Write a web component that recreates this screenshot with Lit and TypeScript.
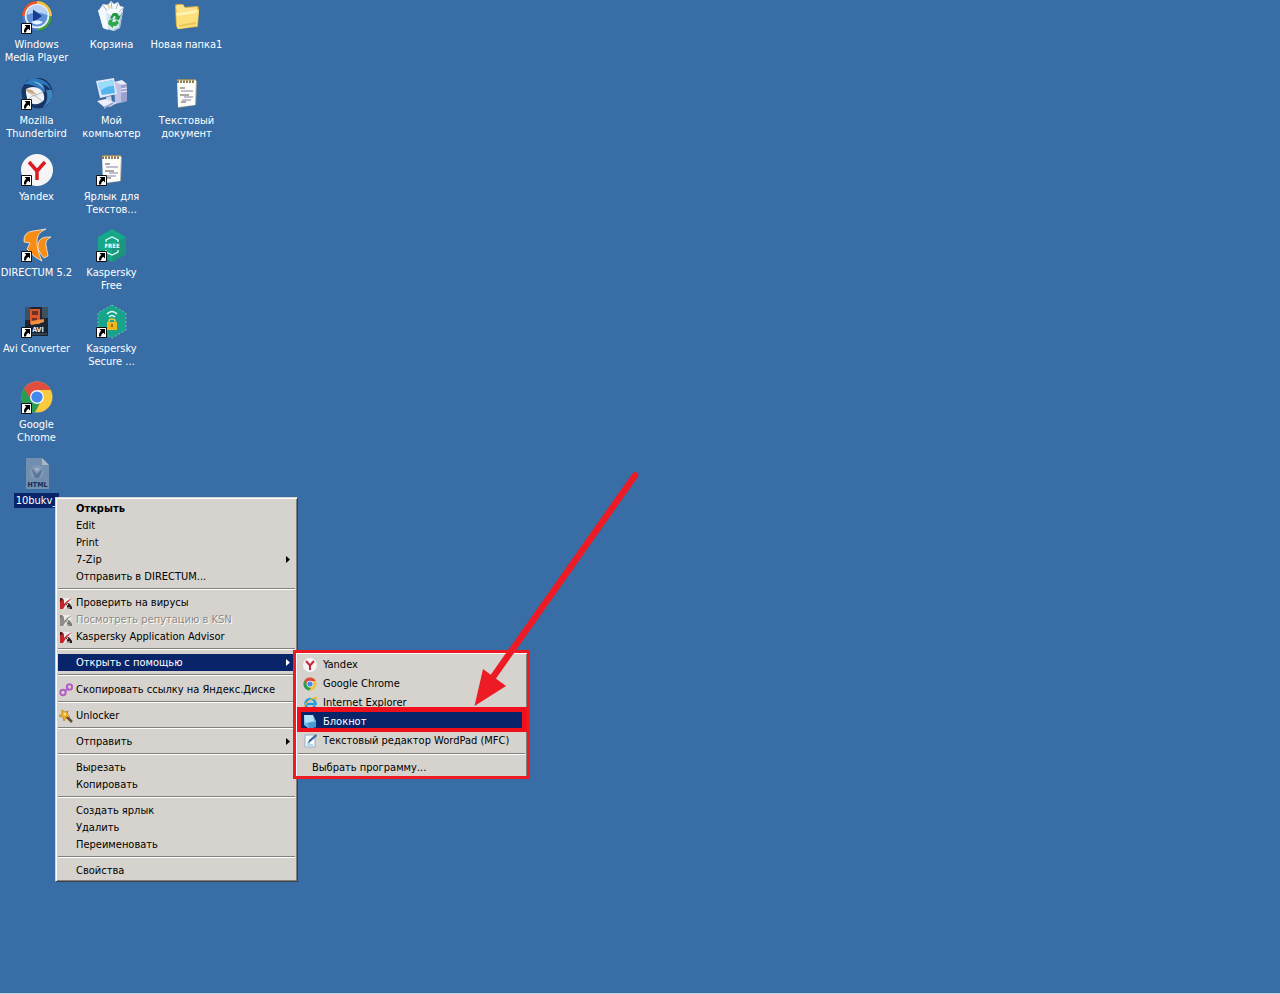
import { LitElement, html, svg, css, nothing, TemplateResult, SVGTemplateResult } from "lit";
import { customElement, property } from "lit/decorators.js";
import { classMap } from "lit/directives/class-map.js";

type Art = Record<string, SVGTemplateResult>;

const desktopArt: Art = {
  player: svg`
    <circle cx="16" cy="15" r="15.500" fill="#2d5f9c"/>
    <path d="M16 0A15 15 0 0 0 1 15h6a9 9 0 0 1 9-9z" fill="#e4572a"/>
    <path d="M16 0a15 15 0 0 1 15 15h-5a10 10 0 0 0-10-10z" fill="#f0c040"/>
    <path d="M31 15a15 15 0 0 1-15 15v-5a10 10 0 0 0 10-10z" fill="#3fa043"/>
    <path d="M1 15a15 15 0 0 0 15 15v-5A10 10 0 0 1 6 15z" fill="#4679c8"/>
    <circle cx="16" cy="15" r="12.300" fill="#e6edf7"/>
    <circle cx="16" cy="15" r="10.500" fill="#5d90d8"/>
    <path d="M6 14a10 10 0 0 1 20 0q-10-5-20 0z" fill="#b9d3f4"/>
    <path d="M12 8.500 21 15l-9 6.500z" fill="#173d92"/>
    <path d="M10 21q6 5 12 0l-4-1.500h-4z" fill="#e8f2fd"/>`,
  recycle: svg`
    <path d="m2 9 25 1-3 17-6 3-11-3z" fill="#d4e5ef"/>
    <path d="m2 9 8 3 2 17-5-2z" fill="#f4fafd"/>
    <path d="m3 9 4-6 5 1 3-4 3 3 4-2 2 4 4 1-2 5-10 3z" fill="#f8fbfd"/>
    <path d="m7 4 4 6M15 0l1 8m6-6-2 6m8-2-5 5" stroke="#9db9cd" fill="none"/>
    <path d="m11 3 4 2-2 4" fill="#e9d79e"/>
    <path d="m26 11-3 16-5 2" stroke="#9ebbd0" fill="none"/>
    <path d="m14 17 3-5h4l2 3 2-1-2 5-5-1 2-1-1-2-1 0-2 3z" fill="#239842"/>
    <path d="m13 19 4-1-1 3h3l2-2 2 3-3 3h-3v2l-5-4z" fill="#2fa94b"/>`,
  folder: svg`
    <path d="M4 5q0-2 2-2h6l2 3 12-1q2 0 2 2l-1 19-20 2-2-3z" fill="#d9ad3c"/>
    <path d="M5 6q0-2 2-2h5l2 3 12-1v4L6 12z" fill="#fbe58f"/>
    <path d="m5 11 21-3q2 0 2 2l-2 15-18 3q-2 0-2-2z" fill="#fbe07c"/>
    <path d="m6 12 20-3-1 3-19 3z" fill="#fff3b4"/>
    <path d="m8 25 17-3" stroke="#edc65a" stroke-width="2"/>`,
  thunderbird: svg`
    <path d="M6 3 13 2Q21-1 27 5q6 6 4 14-2 9-10 12Q11 33 4 25-1 19 1 11z" fill="#173567"/>
    <path d="M3 7Q9-1 18 2q10 2 12 12-3-6-9-7 4 5 2 9-8-9-20-9z" fill="#2f78bd"/>
    <path d="M31 13q2 12-9 17 7-8 3-17z" fill="#3f86c0"/>
    <path d="M5 12q7-4 14 0 5 4 4 11-4 5-11 4Q4 24 5 12z" fill="#eef1f3"/>
    <path d="m5 13 8 6 9-4M6 23l7-5 8 6" stroke="#b5b9bb" fill="none"/>
    <path d="m5 12 6 1 5 5-9-3z" fill="#cda477"/>
    <path d="M11 4q10 1 13 9-4-5-13-9" fill="#7dbbe5"/>`,
  computer: svg`
    <path d="m18 5 13 2v17l-12 3z" fill="#bec2e4"/>
    <path d="m18 5 8-2 5 4-4 1z" fill="#eceefb"/>
    <path d="m25 8 6-1v17l-6 2z" fill="#9ba2d2"/>
    <path d="m25 12 6-1m-6 4 6-1" stroke="#f1f2ff"/>
    <path d="m0 4 18-3 3 16-17 4z" fill="#e4e8f7"/>
    <path d="m2 6 15-3 2 13-13 2z" fill="#55b4ed"/>
    <path d="m2 6 15-3 1 6Q9 9 5 14z" fill="#9bdcfa"/>
    <path d="m10 20 5-1 1 5 5 2-7 4-7-3 4-2z" fill="#d0d5ec"/>
    <path d="m1 24 9-2 7 3-9 5z" fill="#eff1fa"/>
    <path d="m8 30 9-5v2l-9 5z" fill="#9ba7d5"/>`,
  note: svg`
    <path d="M7 4h19l-1 24-18 3z" fill="#aaa697"/>
    <path d="M6 3h19l-1 25-17 2z" fill="#fcfcf8"/>
    <path d="M7 2v4m3-4v4m3-4v4m3-4v4m3-4v4m3-4v4" stroke="#65522e" stroke-width="1.500"/>
    <path d="M6 3h19" stroke="#d4b76b"/>
    <path d="M9 11h5m-5 7h9m-8 7h5" stroke="#545454"/>
    <path d="M10 14h12m-9 6h9m-11 3h9" stroke="#8581a8"/>`,
  yandex: svg`
    <circle cx="16" cy="17" r="16" fill="#f5f5f5"/>
    <path d="m8 9 8 9 8-9M16 17v10" stroke="#d91c24" stroke-width="3.500" fill="none"/>`,
  directum: svg`
    <path d="M3 13Q2 3 12 2l13-2q-10 4-9 14 0 7 5 18l-7-4-8-8 3-6z" fill="#f78d14" stroke="#fff" stroke-width=".7"/>
    <path d="M17 15q1-8 13-7-6 3-5 8l2 11-4 2q-7-7-6-14z" fill="#f78d14" stroke="#fff" stroke-width=".7"/>`,
  kfree: svg`
    <path d="M16 0 30 8v17l-14 8L2 25V8z" fill="#16a788"/>
    <path d="m30 8-14 9v16l14-8z" fill="#1b957c"/>
    <path d="M10 13v-2l6-3 6 3v2M10 21v2l6 3 6-3v-2" stroke="#d8fff4" fill="none" stroke-width="1.300"/>
    <text x="16" y="19" text-anchor="middle" font-size="6" font-weight="bold" fill="#fff">FREE</text>`,
  avi: svg`
    <path d="M4 2h23v29H4z" fill="#202631"/>
    <path d="M4 2h5v13H4zM21 2h6v11h-6z" fill="#3c5260"/>
    <path d="M9 4h10v15H9z" fill="#db572d"/>
    <path d="M11 6h6v4h-6zm0 7h5v4h-5z" fill="#713124"/>
    <path d="m10 16 13-2v3l-7 2-6 1z" fill="#ef9142"/>
    <path d="M4 20h23v11H4z" fill="#1b2331"/>
    <text x="17" y="27" text-anchor="middle" font-size="7" font-weight="bold" fill="#e5eef8">AVI</text>
    <path d="M11 29h15" stroke="#465f7b"/>`,
  ksecure: svg`
    <path d="M16 0 30 8v17l-14 8L2 25V8z" fill="#18a48b"/>
    <path d="M16 0 30 8v17l-14 8L2 25V8z" stroke="#a7e2d4" stroke-dasharray="2 2" fill="none" stroke-width=".6"/>
    <path d="M11 9q5-5 10 0m-8 3q3-3 6 0" stroke="#e8fff8" fill="none" stroke-width="1.500"/>
    <path d="M13 18v-2q0-2 3-2t3 2v2" stroke="#efc842" fill="none" stroke-width="1.500"/>
    <path d="M11 17h10v8H11z" fill="#eeb722"/>
    <path d="M16 19v3" stroke="#845e14" stroke-width="1.500"/>`,
  chrome: svg`
    <circle cx="16" cy="16" r="15.500" fill="#f9ca3c"/>
    <path d="M3 7A15.500 15.500 0 0 0 14 31.300L19 22z" fill="#279e54"/>
    <path d="M16 9h13.800A15.500 15.500 0 0 0 3 7.500L9.500 18z" fill="#df4e3e"/>
    <circle cx="16" cy="16" r="7" fill="#eef4ff"/>
    <circle cx="16" cy="16" r="5.600" fill="#4488ef"/>`,
  htmlfile: svg`
    <path d="M5 1h16l7 7v24H5z" fill="#718fae"/>
    <path d="M21 1v7h7z" fill="#a8b8cb"/>
    <circle cx="16" cy="15" r="7" fill="#8099b4"/>
    <path d="m10 11 6 6 6-6-4 10h-4z" fill="#5b7499"/>
    <path d="m13 11 3 4 3-4z" fill="#a3b1c4"/>
    <text x="16.500" y="30" text-anchor="middle" font-size="7" font-weight="bold" fill="#122c55">HTML</text>`,
};

const kaspersky = (main: string, dark: string) => svg`
  <path d="M1 2h11v5L7 8z" fill="#eeeceb"/>
  <path d="M1 2h2l2 2v4l3-3 5-3L7 8l-3 5H1z" fill="${main}"/>
  <path d="M1 2v4l3-3z" fill="${dark}"/>
  <path d="m7 8 3-1 3 4v2H9z" fill="${dark}"/>
  <path d="M5 13 9 8" stroke="#f4f2f0"/>
  <path d="M9 11h2v2H9z" fill="#8f8c8c"/>`;

const menuArt: Art = {
  kav: kaspersky("#c3242a", "#2b1a1a"),
  kavOff: kaspersky("#8b8b88", "#777775"),
  link: svg`
    <g fill="none" stroke="#b45fc4" stroke-width="2">
      <circle cx="4" cy="9.500" r="2.700"/><circle cx="10.500" cy="4" r="2.700"/><path d="m5.500 8.500 4-3.500"/>
    </g>`,
  wand: svg`
    <path d="m6 6 7 7" stroke="#6b4a24" stroke-width="2.500"/>
    <path d="m3 1 3 2 3-1-1 3 3 3-4 0-2 4-1-4-4-1 3-2z" fill="#f1b52b" stroke="#a46a12" stroke-width=".6"/>
    <path d="m5 4 2 2" stroke="#fff0a0" stroke-width="1.500"/>`,
  yandex: svg`
    <circle cx="7" cy="7" r="7" fill="#f4f4f4"/>
    <path d="m3 3 4 4.500L11 3M7 7v5" stroke="#c5283a" stroke-width="2" fill="none"/>`,
  chrome: svg`
    <circle cx="7" cy="7" r="6.500" fill="#f3c23b"/>
    <path d="M7 4h5.800A6.500 6.500 0 0 0 1.500 3.500L4 8z" fill="#dc4b3e"/>
    <path d="M1.500 3.500 4 8q1 3 4 3l-2 2.500A6.500 6.500 0 0 1 1.500 3.500z" fill="#2a9c54"/>
    <circle cx="7" cy="7" r="3.300" fill="#eef4ff"/><circle cx="7" cy="7" r="2.600" fill="#4686e4"/>`,
  ie: svg`
    <path d="M12 10q-2 3-5 3a5 5 0 1 1 5.500-5H4" fill="none" stroke="#249bd8" stroke-width="2.600"/>
    <path d="M1 13q-2-3 4-8 6-5 9-4 1 1-1 4 0-3-3-2-5 2-8 7-1 2-1 3z" fill="#e8bd3d"/>`,
  notepad: svg`
    <path d="M1 0h9l3 6v6l-8 1-4-3z" fill="#70b9e1"/>
    <path d="m1 0 9 0 1 6-9 2z" fill="#b5e0f5"/>
    <path d="m5 8 8-1v5l-7 2z" fill="#4d97d2"/>`,
  wordpad: svg`
    <path d="M2 1h10v12H2z" fill="#f5f9fc" stroke="#97aeca"/>
    <path d="M4 11h6M4 9h3" stroke="#74b2df"/>
    <path d="m5 9 1-3 7-6 1 2-7 6z" fill="#376a9f"/>`,
};

interface Entry {
  text: string;
  icon?: string;
  bold?: boolean;
  off?: boolean;
  active?: boolean;
  sub?: boolean;
  plain?: boolean;
  tall?: boolean;
}

const mainMenu: Entry[][] = [
  [
    { text: "Открыть", bold: true },
    { text: "Edit" },
    { text: "Print" },
    { text: "7-Zip", sub: true },
    { text: "Отправить в DIRECTUM..." },
  ],
  [
    { text: "Проверить на вирусы", icon: "kav" },
    { text: "Посмотреть репутацию в KSN", icon: "kavOff", off: true },
    { text: "Kaspersky Application Advisor", icon: "kav" },
  ],
  [{ text: "Открыть с помощью", sub: true, active: true }],
  [{ text: "Скопировать ссылку на Яндекс.Диске", icon: "link", tall: true }],
  [{ text: "Unlocker", icon: "wand" }],
  [{ text: "Отправить", sub: true }],
  [{ text: "Вырезать" }, { text: "Копировать" }],
  [{ text: "Создать ярлык" }, { text: "Удалить" }, { text: "Переименовать" }],
  [{ text: "Свойства" }],
];

const openWith: Entry[][] = [
  [
    { text: "Yandex", icon: "yandex" },
    { text: "Google Chrome", icon: "chrome" },
    { text: "Internet Explorer", icon: "ie" },
    { text: "Блокнот", icon: "notepad", active: true },
    { text: "Текстовый редактор WordPad (MFC)", icon: "wordpad" },
  ],
  [{ text: "Выбрать программу...", plain: true }],
];

@customElement("desktop-icon")
class DesktopIcon extends LitElement {
  @property() art = "";
  @property() label = "";
  @property({ type: Boolean }) shortcut = false;
  @property({ type: Boolean }) selected = false;

  static styles = css`
    :host { display: block; box-sizing: border-box; height: 76px; padding: 1px 2px 0 0; }
    .icon {
      display: flex; flex-direction: column; align-items: center; gap: 4px;
      width: 100%; padding: 0; border: 0; background: none;
      color: #fff; font: inherit; line-height: 13px; text-align: center;
    }
    .art { width: 32px; height: 33px; flex: none; overflow: visible; }
    .label { white-space: pre; }
    .selected { background: #0a246a; margin-top: -1px; padding: 1px 2px; }
  `;

  render(): TemplateResult {
    return html`
      <button class="icon" type="button">
        <svg class="art" viewBox="0 0 32 33" aria-hidden="true">
          ${desktopArt[this.art]}
          ${this.shortcut
            ? svg`<path d="M.5 22.500h10v10H.500z" fill="#fff" stroke="#111"/>
                <path d="M3.500 24H9v5.500L7.300 27.800Q5 29.500 5 31.500H3Q2.500 28 5.200 25.700z" fill="#000"/>`
            : nothing}
        </svg>
        <span class=${classMap({ label: true, selected: this.selected })}>${this.label}</span>
      </button>`;
  }
}

@customElement("popup-menu")
class PopupMenu extends LitElement {
  @property({ attribute: false }) groups: Entry[][] = [];
  @property({ type: Boolean, reflect: true }) roomy = false;

  static styles = css`
    :host {
      display: block; box-sizing: border-box; padding: 2px;
      background: #d6d3ce;
      border: 1px solid #d6d3ce; border-right-color: #404040; border-bottom-color: #404040;
      box-shadow: inset 1px 1px #fff, inset -1px -1px #808080;
    }
    .item {
      display: flex; align-items: center; width: 100%; height: 17px;
      padding: 0 5px 0 1px; border: 0; background: none;
      color: #000; font: inherit; line-height: 17px; text-align: left; white-space: nowrap;
    }
    .tall { height: 18px; padding-top: 1px; }
    .slot { display: flex; width: 17px; flex: none; }
    .slot svg { width: 14px; height: 14px; }
    .text { flex: 1; }
    .bold { font-weight: bold; }
    .off { color: #8c8a86; text-shadow: 1px 1px #fff; }
    .active { background: #0a246a; color: #fff; }
    .arrow { width: 4px; height: 7px; fill: currentColor; }
    .rule { height: 1px; margin: 3px 0 4px; border: 0; border-top: 1px solid #808080; background: #fff; }
    :host([roomy]) .item { height: 19px; padding-left: 5px; }
    :host([roomy]) .slot { width: 20px; }
    :host([roomy]) .plain { height: 17px; padding-left: 14px; }
  `;

  private item(e: Entry): TemplateResult {
    return html`
      <button type="button" role="menuitem" ?disabled=${e.off}
        class=${classMap({ item: true, bold: !!e.bold, off: !!e.off, active: !!e.active, plain: !!e.plain, tall: !!e.tall })}>
        ${e.plain ? nothing : html`<span class="slot">${e.icon
          ? html`<svg viewBox="0 0 14 14" aria-hidden="true">${menuArt[e.icon]}</svg>` : nothing}</span>`}
        <span class="text">${e.text}</span>
        ${e.sub ? html`<svg class="arrow" viewBox="0 0 4 7" aria-hidden="true"><path d="M0 0 4 3.500 0 7z"/></svg>` : nothing}
      </button>`;
  }

  render(): TemplateResult {
    return html`<div role="menu">
      ${this.groups.map((g, i) => html`${i ? html`<hr class="rule">` : nothing}${g.map((e) => this.item(e))}`)}
    </div>`;
  }
}

@customElement("app-root")
class AppRoot extends LitElement {
  static styles = css`
    :host {
      display: block; position: relative; box-sizing: border-box; min-height: 100vh;
      background: #386da5; border-bottom: 1px solid #c3d2e2; overflow: hidden;
      font-family: Tahoma, "DejaVu Sans Condensed", "DejaVu Sans", sans-serif;
      font-size: 11px;
    }
    .icons { display: flex; }
    .column { width: 75px; }
    .context { position: absolute; left: 55px; top: 497px; width: 243px; }
    .submenu { position: absolute; left: 295px; top: 652px; width: 233px; }
    .frame { position: absolute; left: 293px; top: 650px; width: 237px; height: 129px; box-sizing: border-box; border: 3px solid #ed1c24; }
    .mark { position: absolute; left: 297px; top: 707px; width: 230px; height: 25px; box-sizing: border-box; border: 5px solid #f0101c; border-width: 5px 5px 4px 4px; }
    .pointer { position: absolute; left: 470px; top: 470px; width: 170px; height: 240px; }
  `;

  render(): TemplateResult {
    return html`
      <main class="icons">
        <div class="column">
          <desktop-icon art="player" label=${"Windows\nMedia Player"} shortcut></desktop-icon>
          <desktop-icon art="thunderbird" label=${"Mozilla\nThunderbird"} shortcut></desktop-icon>
          <desktop-icon art="yandex" label="Yandex" shortcut></desktop-icon>
          <desktop-icon art="directum" label="DIRECTUM 5.2" shortcut></desktop-icon>
          <desktop-icon art="avi" label="Avi Converter" shortcut></desktop-icon>
          <desktop-icon art="chrome" label=${"Google\nChrome"} shortcut></desktop-icon>
          <desktop-icon art="htmlfile" label="10bukv_" selected></desktop-icon>
        </div>
        <div class="column">
          <desktop-icon art="recycle" label="Корзина"></desktop-icon>
          <desktop-icon art="computer" label=${"Мой\nкомпьютер"}></desktop-icon>
          <desktop-icon art="note" label=${"Ярлык для\nТекстов..."} shortcut></desktop-icon>
          <desktop-icon art="kfree" label=${"Kaspersky\nFree"} shortcut></desktop-icon>
          <desktop-icon art="ksecure" label=${"Kaspersky\nSecure ..."} shortcut></desktop-icon>
        </div>
        <div class="column">
          <desktop-icon art="folder" label="Новая папка1"></desktop-icon>
          <desktop-icon art="note" label=${"Текстовый\nдокумент"}></desktop-icon>
        </div>
      </main>
      <popup-menu class="context" .groups=${mainMenu}></popup-menu>
      <popup-menu class="submenu" roomy .groups=${openWith}></popup-menu>
      <div class="frame"></div>
      <div class="mark"></div>
      <svg class="pointer" viewBox="0 0 170 240" aria-hidden="true">
        <path d="M165 5.500 21 210" stroke="#ed1c24" stroke-width="6.500" stroke-linecap="round"/>
        <path d="M4.500 236 13 199l23 17z" fill="#ed1c24"/>
      </svg>`;
  }
}
